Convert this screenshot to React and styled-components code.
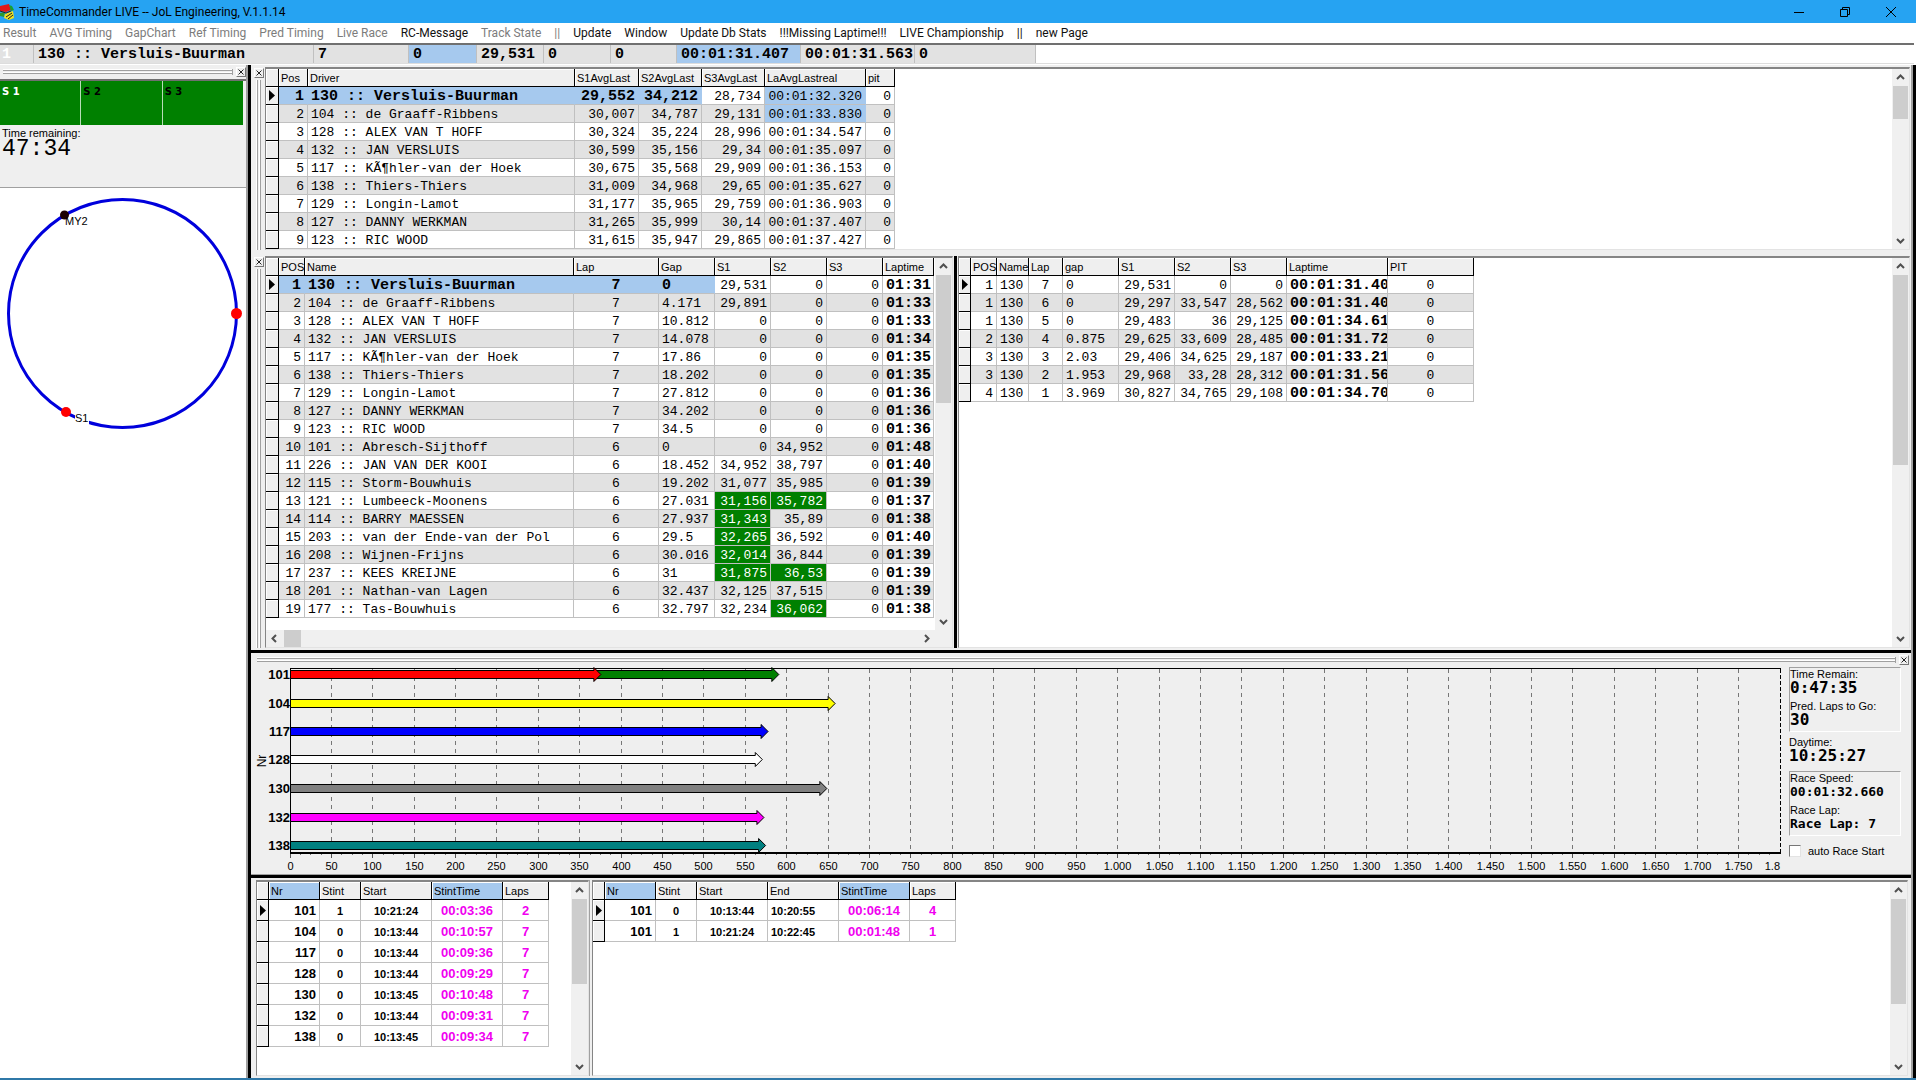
import React from "react";
import styled, { createGlobalStyle, css } from "styled-components";

const C = {
  face: "#efefef",
  stripe: "#e2e2e2",
  line: "#c0c0c0",
  shade: "#a0a0a0",
  dark: "#707070",
  sel: "#a6c9ee",
  green: "#008000",
  magenta: "#f000f0",
};

const SANS = '"Liberation Sans", Arial, sans-serif';
const MONO = '"Liberation Mono", "Courier New", monospace';
const UI = 'Roboto, "Segoe UI", sans-serif';

const GlobalStyle = createGlobalStyle`
  * { box-sizing: border-box; }
  body { margin: 0; background: #fff; color: #000; font: 11px ${SANS}; }
  button { margin: 0; padding: 0; border: 0; background: none; font: inherit; color: inherit; }
`;

/* ---------- window frame ---------- */

const Frame = styled.div`
  display: flex;
  flex-direction: column;
  min-height: 100vh;
  border-bottom: 2px solid #2f78a8;
`;

const TitleBar = styled.header`
  display: flex;
  align-items: center;
  height: 23px;
  background: #26a3f2;
  svg { display: block; }
`;

const Title = styled.h1`
  flex: 1;
  margin: 0;
  padding-left: 5px;
  font: 12px/22px ${UI};
`;

const WindowButton = styled.button`
  display: flex;
  align-items: center;
  justify-content: center;
  width: 46px;
  height: 21px;
  &:last-child { margin-right: 2px; }
`;

const MenuBar = styled.nav`
  display: flex;
  gap: 13px;
  height: 20px;
  padding-left: 3px;
  background: #fff;
`;

const MenuItem = styled.button`
  font: 12px/20px ${UI};
  white-space: nowrap;
  color: #111;
  &:disabled { color: #7c7c7c; }
`;

const Strip = styled.div`
  display: flex;
  height: 21px;
  margin: 0 2px 1px 0;
  border-top: 2px solid ${C.dark};
  border-bottom: 1px solid #ddd;
  background: #fff;
`;

const StripCell = styled.div`
  flex: none;
  width: ${(p) => p.$w}px;
  height: 18px;
  padding-left: ${(p) => p.$pad || 4}px;
  border-right: 1px solid ${C.line};
  background: ${(p) => (p.$sel ? C.sel : C.stripe)};
  color: ${(p) => (p.$faint ? "#fff" : "#000")};
  font: bold 15px/20px ${MONO};
  white-space: pre;
`;

const Workspace = styled.main`
  flex: 1;
  display: flex;
  align-items: stretch;
  border-right: 3px solid #000;
`;

/* ---------- docking chrome ---------- */

const Splitter = styled.div`
  flex: none;
  background: #000;
  ${(p) => (p.$v ? "width: 3px;" : "height: 3px;")}
`;

const CloseBox = styled.button`
  flex: none;
  display: flex;
  align-items: center;
  justify-content: center;
  width: 10px;
  height: 10px;
  background: ${C.face};
  border: 1px solid;
  border-color: #fff #777 #777 #fff;
`;

const Grip = styled.div`
  flex: 1;
  ${(p) =>
    p.$v
      ? css`
          width: 6px;
          background: linear-gradient(90deg, #fff 1px, ${C.shade} 1px 2px, ${C.face} 2px 3px, #fff 3px 4px, ${C.shade} 4px 5px, ${C.face} 5px);
        `
      : css`
          height: 6px;
          border-right: 1px solid ${C.shade};
          background: linear-gradient(#fff 1px, ${C.shade} 1px 2px, ${C.face} 2px 3px, #fff 3px 4px, ${C.shade} 4px 5px, ${C.face} 5px);
        `}
`;

const TopGripBar = styled.div`
  display: flex;
  align-items: center;
  gap: 3px;
  height: 14px;
  padding: 0 0 0 3px;
  background: ${C.face};
`;

const Gutter = styled.div`
  flex: none;
  display: flex;
  flex-direction: column;
  align-items: center;
  gap: 2px;
  width: 14px;
  padding: 1px 0 0 1px;
  background: ${C.face};
`;

const Sunken = styled.div`
  flex: ${(p) => (p.$w ? "none" : "1")};
  ${(p) => p.$w && `width: ${p.$w}px;`}
  min-width: 0;
  display: flex;
  flex-direction: column;
  background: #fff;
  border: 1px solid;
  border-width: 2px 1px 1px 1px;
  border-color: #858585 #e3e3e3 #e3e3e3 #858585;
`;

const SunkenBody = styled.div`
  flex: 1;
  display: flex;
  justify-content: space-between;
  min-width: 0;
`;

/* ---------- scroll bars ---------- */

const Bar = styled.div`
  flex: none;
  display: flex;
  flex-direction: ${(p) => (p.$h ? "row" : "column")};
  background: #f0f0f0;
  ${(p) => (p.$h ? "height: 17px; padding-right: 17px;" : "width: 17px;")}
`;

const BarButton = styled.button`
  flex: none;
  display: flex;
  align-items: center;
  justify-content: center;
  width: 17px;
  height: 17px;
  &:last-child { ${(p) => (p.$h ? "margin-left: auto;" : "margin-top: auto;")} }
`;

const Thumb = styled.div`
  margin: 0 1px;
  background: #cdcdcd;
  ${(p) => (p.$h ? `width: ${p.$size}px;` : `height: ${p.$size}px;`)}
`;

const chevrons = {
  up: "M1 6 L4.5 2.5 L8 6",
  down: "M1 3 L4.5 6.5 L8 3",
  left: "M6 1 L2.5 4.5 L6 8",
  right: "M3 1 L6.5 4.5 L3 8",
};

const Chevron = ({ dir }) => (
  <svg width="9" height="9" viewBox="0 0 9 9" aria-hidden="true">
    <path d={chevrons[dir]} fill="none" stroke="#505050" strokeWidth="2" />
  </svg>
);

const ScrollBar = ({ h, size }) => (
  <Bar $h={h}>
    <BarButton $h={h} aria-label={h ? "Scroll left" : "Scroll up"}>
      <Chevron dir={h ? "left" : "up"} />
    </BarButton>
    <Thumb $h={h} $size={size} />
    <BarButton $h={h} aria-label={h ? "Scroll right" : "Scroll down"}>
      <Chevron dir={h ? "right" : "down"} />
    </BarButton>
  </Bar>
);

const Close = () => (
  <CloseBox aria-label="Close panel">
    <svg width="6" height="6" viewBox="0 0 6 6" aria-hidden="true">
      <path d="M0.5 0.5 L5.5 5.5 M5.5 0.5 L0.5 5.5" stroke="#222" strokeWidth="1" />
    </svg>
  </CloseBox>
);

/* ---------- data grid ---------- */

const Table = styled.table`
  flex: none;
  align-self: flex-start;
  width: ${(p) => p.$w}px;
  table-layout: fixed;
  border-collapse: separate;
  border-spacing: 0;
`;

const Th = styled.th`
  height: 18px;
  padding: 2px 0 0 2px;
  overflow: hidden;
  background: ${(p) => (p.$sel ? C.sel : C.face)};
  border: solid #000;
  border-width: 0 1px 1px 0;
  box-shadow: inset 1px 1px 0 #fff;
  font: 11px/15px ${SANS};
  text-align: left;
  white-space: nowrap;
`;

const Marker = styled.th`
  padding: 0 0 0 3px;
  background: ${C.face};
  border: solid #000;
  border-width: 0 1px 1px 0;
  box-shadow: inset 1px 1px 0 #fff;
  svg { display: block; }
`;

const Td = styled.td`
  height: ${(p) => p.$rowH}px;
  padding: 2px ${(p) => (p.$align === "right" ? 3 : 0)}px 0 ${(p) => (p.$align === "center" ? 0 : 3)}px;
  overflow: hidden;
  border: solid ${C.line};
  border-width: 0 1px 1px 0;
  ${(p) => p.$tone === "sel" && `border-right-color: ${C.sel};`}
  background: ${(p) =>
    p.$tone === "sel" ? C.sel : p.$tone === "best" ? C.green : p.$stripe ? C.stripe : "#fff"};
  color: ${(p) => (p.$tone === "best" ? "#fff" : p.$pink ? C.magenta : "#000")};
  font-family: ${(p) => (p.$sans ? SANS : MONO)};
  font-size: ${(p) => p.$size}px;
  font-weight: ${(p) => (p.$bold ? "bold" : "normal")};
  line-height: ${(p) => p.$rowH - 3}px;
  text-align: ${(p) => p.$align};
  white-space: pre;
`;

/* A column is { t: title, w: width, a: alignment, bold, pink, size, sel }. */
function Grid({ label, marker, cols, rows, rowH = 18, sans, striped, tones = {} }) {
  const total = cols.reduce((s, c) => s + c.w, marker);
  return (
    <Table $w={total} aria-label={label}>
      <colgroup>
        <col style={{ width: marker }} />
        {cols.map((c) => (
          <col key={c.t} style={{ width: c.w }} />
        ))}
      </colgroup>
      <thead>
        <tr>
          <Th aria-label="Current row" />
          {cols.map((c) => (
            <Th key={c.t} scope="col" $sel={c.sel}>
              {c.t}
            </Th>
          ))}
        </tr>
      </thead>
      <tbody>
        {rows.map((r, i) => (
          <tr key={i}>
            <Marker aria-label={i === 0 ? "Selected" : "Row"}>
              {i === 0 && (
                <svg width="6" height="11" viewBox="0 0 6 11" aria-hidden="true">
                  <path d="M0 0 L6 5.5 L0 11 Z" />
                </svg>
              )}
            </Marker>
            {r.map((v, j) => {
              const tone = tones[`${i}:${j}`] || "";
              const c = cols[j];
              const bold = c.bold || tone === "sel bold";
              return (
                <Td
                  key={j}
                  $rowH={rowH}
                  $align={c.a}
                  $stripe={striped && i % 2 === 1}
                  $tone={tone.split(" ")[0]}
                  $bold={bold}
                  $pink={c.pink}
                  $sans={sans}
                  $size={c.size || (bold ? 15 : 13)}
                >
                  {v}
                </Td>
              );
            })}
          </tr>
        ))}
      </tbody>
    </Table>
  );
}

/* ---------- data ---------- */

const menu = [
  ["Result", 0], ["AVG Timing", 0], ["GapChart", 0], ["Ref Timing", 0], ["Pred Timing", 0],
  ["Live Race", 0], ["RC-Message", 1], ["Track State", 0], ["||", 0], ["Update", 1],
  ["Window", 1], ["Update Db Stats", 1], ["!!!Missing Laptime!!!", 1],
  ["LIVE Championship", 1], ["||", 1], ["new Page", 1],
];

const strip = [
  { v: "1", w: 34, faint: true, pad: 2 },
  { v: "130 :: Versluis-Buurman", w: 280 },
  { v: "7", w: 95 },
  { v: "0", w: 68, sel: true },
  { v: "29,531", w: 67 },
  { v: "0", w: 67 },
  { v: "0", w: 66 },
  { v: "00:01:31.407", w: 124, sel: true },
  { v: "00:01:31.563", w: 114 },
  { v: "0", w: 121 },
];

const avgCols = [
  { t: "Pos", w: 29, a: "right" },
  { t: "Driver", w: 267, a: "left" },
  { t: "S1AvgLast", w: 64, a: "right" },
  { t: "S2AvgLast", w: 63, a: "right" },
  { t: "S3AvgLast", w: 63, a: "right" },
  { t: "LaAvgLastreal", w: 101, a: "right" },
  { t: "pit", w: 29, a: "right" },
];

const avgRows = [
  ["1", "130 :: Versluis-Buurman", "29,552", "34,212", "28,734", "00:01:32.320", "0"],
  ["2", "104 :: de Graaff-Ribbens", "30,007", "34,787", "29,131", "00:01:33.830", "0"],
  ["3", "128 :: ALEX VAN T HOFF", "30,324", "35,224", "28,996", "00:01:34.547", "0"],
  ["4", "132 :: JAN VERSLUIS", "30,599", "35,156", "29,34", "00:01:35.097", "0"],
  ["5", "117 :: KÃ¶hler-van der Hoek", "30,675", "35,568", "29,909", "00:01:36.153", "0"],
  ["6", "138 :: Thiers-Thiers", "31,009", "34,968", "29,65", "00:01:35.627", "0"],
  ["7", "129 :: Longin-Lamot", "31,177", "35,965", "29,759", "00:01:36.903", "0"],
  ["8", "127 :: DANNY WERKMAN", "31,265", "35,999", "30,14", "00:01:37.407", "0"],
  ["9", "123 :: RIC WOOD", "31,615", "35,947", "29,865", "00:01:37.427", "0"],
];

const avgTones = {
  "0:0": "sel bold", "0:1": "sel bold", "0:2": "sel bold", "0:3": "sel bold",
  "0:5": "sel", "1:5": "sel",
};

const raceCols = [
  { t: "POS", w: 26, a: "right" },
  { t: "Name", w: 269, a: "left" },
  { t: "Lap", w: 85, a: "center" },
  { t: "Gap", w: 56, a: "left" },
  { t: "S1", w: 56, a: "right" },
  { t: "S2", w: 56, a: "right" },
  { t: "S3", w: 56, a: "right" },
  { t: "Laptime", w: 51, a: "left", bold: true },
];

const raceRows = [
  ["1", "130 :: Versluis-Buurman", "7", "0", "29,531", "0", "0", "01:31"],
  ["2", "104 :: de Graaff-Ribbens", "7", "4.171", "29,891", "0", "0", "01:33"],
  ["3", "128 :: ALEX VAN T HOFF", "7", "10.812", "0", "0", "0", "01:33"],
  ["4", "132 :: JAN VERSLUIS", "7", "14.078", "0", "0", "0", "01:34"],
  ["5", "117 :: KÃ¶hler-van der Hoek", "7", "17.86", "0", "0", "0", "01:35"],
  ["6", "138 :: Thiers-Thiers", "7", "18.202", "0", "0", "0", "01:35"],
  ["7", "129 :: Longin-Lamot", "7", "27.812", "0", "0", "0", "01:36"],
  ["8", "127 :: DANNY WERKMAN", "7", "34.202", "0", "0", "0", "01:36"],
  ["9", "123 :: RIC WOOD", "7", "34.5", "0", "0", "0", "01:36"],
  ["10", "101 :: Abresch-Sijthoff", "6", "0", "0", "34,952", "0", "01:48"],
  ["11", "226 :: JAN VAN DER KOOI", "6", "18.452", "34,952", "38,797", "0", "01:40"],
  ["12", "115 :: Storm-Bouwhuis", "6", "19.202", "31,077", "35,985", "0", "01:39"],
  ["13", "121 :: Lumbeeck-Moonens", "6", "27.031", "31,156", "35,782", "0", "01:37"],
  ["14", "114 :: BARRY MAESSEN", "6", "27.937", "31,343", "35,89", "0", "01:38"],
  ["15", "203 :: van der Ende-van der Pol", "6", "29.5", "32,265", "36,592", "0", "01:40"],
  ["16", "208 :: Wijnen-Frijns", "6", "30.016", "32,014", "36,844", "0", "01:39"],
  ["17", "237 :: KEES KREIJNE", "6", "31", "31,875", "36,53", "0", "01:39"],
  ["18", "201 :: Nathan-van Lagen", "6", "32.437", "32,125", "37,515", "0", "01:39"],
  ["19", "177 :: Tas-Bouwhuis", "6", "32.797", "32,234", "36,062", "0", "01:38"],
];

const raceTones = {
  "0:0": "sel bold", "0:1": "sel bold", "0:2": "sel bold", "0:3": "sel bold",
  "12:4": "best", "12:5": "best", "13:4": "best", "14:4": "best", "15:4": "best",
  "16:4": "best", "16:5": "best", "18:5": "best",
};

const lapCols = [
  { t: "POS", w: 26, a: "right" },
  { t: "Name", w: 32, a: "left" },
  { t: "Lap", w: 34, a: "center" },
  { t: "gap", w: 56, a: "left" },
  { t: "S1", w: 56, a: "right" },
  { t: "S2", w: 56, a: "right" },
  { t: "S3", w: 56, a: "right" },
  { t: "Laptime", w: 101, a: "left", bold: true },
  { t: "PIT", w: 86, a: "center" },
];

const lapRows = [
  ["1", "130", "7", "0", "29,531", "0", "0", "00:01:31.40", "0"],
  ["1", "130", "6", "0", "29,297", "33,547", "28,562", "00:01:31.40", "0"],
  ["1", "130", "5", "0", "29,483", "36", "29,125", "00:01:34.61", "0"],
  ["2", "130", "4", "0.875", "29,625", "33,609", "28,485", "00:01:31.72", "0"],
  ["3", "130", "3", "2.03", "29,406", "34,625", "29,187", "00:01:33.21", "0"],
  ["3", "130", "2", "1.953", "29,968", "33,28", "28,312", "00:01:31.56", "0"],
  ["4", "130", "1", "3.969", "30,827", "34,765", "29,108", "00:01:34.70", "0"],
];

const stintCols = [
  { t: "Nr", w: 51, a: "right", bold: true, size: 13, sel: true },
  { t: "Stint", w: 41, a: "center", bold: true, size: 11 },
  { t: "Start", w: 71, a: "center", bold: true, size: 11 },
  { t: "StintTime", w: 71, a: "center", bold: true, size: 13, pink: true, sel: true },
  { t: "Laps", w: 46, a: "center", bold: true, size: 13, pink: true },
];

const stintRows = [
  ["101", "1", "10:21:24", "00:03:36", "2"],
  ["104", "0", "10:13:44", "00:10:57", "7"],
  ["117", "0", "10:13:44", "00:09:36", "7"],
  ["128", "0", "10:13:44", "00:09:29", "7"],
  ["130", "0", "10:13:45", "00:10:48", "7"],
  ["132", "0", "10:13:44", "00:09:31", "7"],
  ["138", "0", "10:13:45", "00:09:34", "7"],
];

const historyCols = [
  ...stintCols.slice(0, 3),
  { t: "End", w: 71, a: "left", bold: true, size: 11 },
  ...stintCols.slice(3),
];

const historyRows = [
  ["101", "0", "10:13:44", "10:20:55", "00:06:14", "4"],
  ["101", "1", "10:21:24", "10:22:45", "00:01:48", "1"],
];

/* ---------- left dock ---------- */

const LeftDock = styled.aside`
  flex: none;
  width: 248px;
  border-right: 2px solid ${C.shade};
  background: #fff;
`;

const Status = styled.section`
  height: 109px;
  padding-right: 3px;
  border-top: 2px solid ${C.dark};
  border-bottom: 1px solid ${C.shade};
  background: ${C.face};
`;

const Sectors = styled.div`
  display: grid;
  grid-template-columns: repeat(3, 1fr);
  gap: 1px;
  background: #b8dcb8;
`;

const Sector = styled.div`
  height: 44px;
  padding: 5px 2px;
  background: ${C.green};
  color: ${(p) => (p.$on ? "#fff" : "#000")};
  font: bold 10px/12px "DejaVu Sans", sans-serif;
`;

const SmallLabel = styled.div`
  font: 11px/12px ${SANS};
  white-space: nowrap;
`;

const Clock = styled.div`
  font: 23px/20px ${MONO};
`;

const StatusText = styled.div`
  padding: 2px;
`;

const TrackBox = styled.div`
  padding-top: 10px;
  svg { display: block; }
  text { font: 11px ${SANS}; }
`;

const TrackMap = () => (
  <TrackBox>
    <svg width="245" height="234" viewBox="0 198 245 234" role="img" aria-label="Track map">
      <circle cx="122.5" cy="313.5" r="114" fill="none" stroke="#0000dc" strokeWidth="3" />
      <circle cx="64.5" cy="215" r="4.5" fill="#1c0000" />
      <circle cx="236.5" cy="313.5" r="5.5" fill="#f00" />
      <rect x="75" y="411" width="14" height="13" fill="#fff" />
      <circle cx="66" cy="412" r="5" fill="#f00" />
      <text x="65" y="225">MY2</text>
      <text x="75" y="422">S1</text>
    </svg>
  </TrackBox>
);

/* ---------- chart ---------- */

const bars = [
  { nr: "101", y: 675, parts: [{ v: 590, c: "#008000" }, { v: 375, c: "#ff0000" }] },
  { nr: "104", y: 704, parts: [{ v: 658, c: "#ffff00" }] },
  { nr: "117", y: 732, parts: [{ v: 577, c: "#0000ff" }] },
  { nr: "128", y: 760, parts: [{ v: 570, c: "#ffffff" }] },
  { nr: "130", y: 789, parts: [{ v: 648, c: "#808080" }] },
  { nr: "132", y: 818, parts: [{ v: 572, c: "#ff00ff" }] },
  { nr: "138", y: 846, parts: [{ v: 574, c: "#008080" }] },
];

const X0 = 36.5;
const UNIT = 0.8277;
const TOP = 668;

const arrow = (v, y) => {
  const tip = X0 + v * UNIT;
  const neck = tip - 7;
  return `M${X0} ${y - 4} H${neck} V${y - 7} L${tip} ${y} L${neck} ${y + 7} V${y + 4} H${X0} Z`;
};

const thousands = (n) => (n >= 1000 ? `${Math.floor(n / 1000)}.${String(n % 1000).padStart(3, "0")}` : `${n}`);

const ChartBox = styled.div`
  flex: 1;
  min-width: 0;
  svg { display: block; width: 100%; height: auto; }
  .tick { font: 11px ${SANS}; text-anchor: middle; }
  .last { font: 11px ${SANS}; text-anchor: end; }
  .nr { font: bold 13px ${SANS}; text-anchor: end; }
  .axis { font: 12px ${SANS}; text-anchor: middle; }
`;

function StintChart() {
  const ticks = Array.from({ length: 36 }, (_, i) => i * 50);
  const minor = Array.from({ length: 144 }, (_, i) => i).filter((i) => i % 4);
  return (
    <ChartBox>
      <svg viewBox="0 0 1527 207" role="img" aria-label="Stint time per car">
        <path d="M36 1.5 H1527" stroke="#000" strokeWidth="1" />
        {ticks.map((t) => {
          const x = Math.round(X0 + t * UNIT) - 0.5;
          return (
            <g key={t}>
              <path d={`M${x} 2 V185`} stroke="#777" strokeDasharray="4 4" />
              <path d={`M${x} 186 V191`} stroke="#555" />
              <text className="tick" x={x} y="203">{thousands(t)}</text>
            </g>
          );
        })}
        <path d="M1526.5 2 V185" stroke="#000" strokeDasharray="4 2" />
        <text className="last" x="1526" y="203">1.8</text>
        {minor.map((i) => (
          <path key={i} d={`M${Math.round(X0 + i * 12.5 * UNIT) - 0.5} 186 V188`} stroke="#777" />
        ))}
        <path d="M36.5 1 V186" stroke="#000" />
        {bars.map((b) => (
          <g key={b.nr} transform={`translate(0 ${-TOP})`}>
            {b.parts.map((p) => (
              <path key={p.c} d={arrow(p.v, b.y + 0.5)} fill={p.c} stroke="#000" strokeWidth="1" />
            ))}
            <text className="nr" x="36" y={b.y + 5}>{b.nr}</text>
          </g>
        ))}
        <path d="M36 186 H1527" stroke="#000" strokeWidth="2" />
        <text className="axis" transform="translate(12 94) rotate(-90)">Nr</text>
      </svg>
    </ChartBox>
  );
}

const ChartPanel = styled.section`
  background: ${C.face};
  border-bottom: 1px solid ${C.shade};
  padding: 0 2px 0 3px;
`;

const ChartRow = styled.div`
  display: flex;
`;

const Side = styled.div`
  flex: none;
  width: 128px;
  padding: 0 8px;
`;

const Well = styled.div`
  display: flex;
  flex-direction: column;
  gap: 4px;
  ${(p) =>
    p.$plain
      ? css`
          height: 39px;
          padding-top: 4px;
        `
      : css`
          height: 65px;
          border: 1px solid;
          border-color: ${C.shade} #fff #fff ${C.shade};
        `}
`;

const Reading = styled.div`
  font: bold ${(p) => p.$size}px/16px "DejaVu Sans Mono", monospace;
  white-space: nowrap;
`;

const Check = styled.label`
  display: flex;
  align-items: center;
  gap: 7px;
  padding-top: 8px;
  font: 11px/14px ${SANS};
  white-space: nowrap;
  input {
    appearance: none;
    width: 12px;
    height: 12px;
    margin: 0;
    background: #fff;
    border: 1px solid;
    border-color: #777 #e3e3e3 #e3e3e3 #777;
  }
`;

const Field = ({ label, size, children }) => (
  <div>
    <SmallLabel>{label}</SmallLabel>
    <Reading $size={size}>{children}</Reading>
  </div>
);

/* ---------- right side ---------- */

const Main = styled.div`
  flex: 1;
  min-width: 0;
  display: flex;
  flex-direction: column;
  background: ${C.face};
  border-right: 2px solid ${C.shade};
`;

const PanelRow = styled.section`
  display: flex;
  ${(p) => p.$grow && "flex: 1;"}
  padding: ${(p) => p.$p || "0"};
`;

const Tail = styled.div`
  height: 12px;
`;

const MidSplit = styled(Splitter)`
  margin: 0 1px;
`;

const Divider = styled.div`
  flex: none;
  width: 3px;
  border-left: 1px solid ${C.shade};
`;

function AppIcon() {
  return (
    <svg width="14" height="20" viewBox="0 0 14 20" aria-hidden="true">
      <path d="M0 4 L9 2 L11 8 L6 10 L0 9 Z" fill="#e01818" />
      <path d="M9 3 L12 4 L14 8 L11 9 Z" fill="#18a030" />
      <path d="M0 11 L5 10 L4 15 L0 14 Z" fill="#2a9a30" />
      <path d="M5 12 L13 9 L14 16 L9 18 L4 16 Z" fill="#f0e020" />
      <path d="M0 9 L6 11 L11 9 M6 15 L12 11 M8 17 L13 13" fill="none" stroke="#222" strokeWidth="1" />
    </svg>
  );
}

export default function App() {
  return (
    <Frame>
      <GlobalStyle />
      <TitleBar>
        <AppIcon />
        <Title>TimeCommander LIVE -- JoL Engineering, V.1.1.14</Title>
        <WindowButton aria-label="Minimize">
          <svg width="10" height="10" viewBox="0 0 10 10"><path d="M0 5.5 H10" stroke="#000" /></svg>
        </WindowButton>
        <WindowButton aria-label="Restore">
          <svg width="10" height="10" viewBox="0 0 10 10">
            <path d="M0.5 2.5 H7.5 V9.5 H0.5 Z M2.5 2.5 V0.5 H9.5 V7.5 H7.5" fill="none" stroke="#000" />
          </svg>
        </WindowButton>
        <WindowButton aria-label="Close">
          <svg width="10" height="10" viewBox="0 0 10 10"><path d="M0 0 L10 10 M10 0 L0 10" stroke="#000" /></svg>
        </WindowButton>
      </TitleBar>
      <MenuBar>
        {menu.map(([t, on], i) => (
          <MenuItem key={i} disabled={!on}>{t}</MenuItem>
        ))}
      </MenuBar>
      <Strip>
        {strip.map((c, i) => (
          <StripCell key={i} $w={c.w} $sel={c.sel} $faint={c.faint} $pad={c.pad}>{c.v}</StripCell>
        ))}
      </Strip>

      <Workspace>
        <LeftDock>
          <TopGripBar>
            <Grip />
            <Close />
          </TopGripBar>
          <Status>
            <Sectors>
              <Sector $on>S 1</Sector>
              <Sector>S 2</Sector>
              <Sector>S 3</Sector>
            </Sectors>
            <StatusText>
              <SmallLabel>Time remaining:</SmallLabel>
              <Clock>47:34</Clock>
            </StatusText>
          </Status>
          <TrackMap />
        </LeftDock>
        <Splitter $v />

        <Main>
          <PanelRow $p="2px 1px 6px 0">
            <Gutter>
              <Close />
              <Grip $v />
            </Gutter>
            <Sunken>
              <SunkenBody>
                <Grid label="Average sector times" marker={13} cols={avgCols} rows={avgRows} striped tones={avgTones} />
                <ScrollBar size={33} />
              </SunkenBody>
            </Sunken>
          </PanelRow>

          <PanelRow $p="0 1px 2px 0">
            <Gutter>
              <Close />
              <Grip $v />
            </Gutter>
            <Sunken $w={688}>
              <SunkenBody>
                <div>
                  <Grid label="Race standing" marker={13} cols={raceCols} rows={raceRows} striped tones={raceTones} />
                  <Tail />
                </div>
                <ScrollBar size={128} />
              </SunkenBody>
              <ScrollBar h size={17} />
            </Sunken>
            <MidSplit $v />
            <Sunken>
              <SunkenBody>
                <Grid label="Laps of the selected car" marker={12} cols={lapCols} rows={lapRows} striped />
                <ScrollBar size={190} />
              </SunkenBody>
            </Sunken>
          </PanelRow>
          <Splitter />

          <ChartPanel>
            <TopGripBar>
              <Grip />
              <Close />
            </TopGripBar>
            <ChartRow>
              <StintChart />
              <Side>
                <Well>
                  <Field label="Time Remain:" size={16}>0:47:35</Field>
                  <Field label="Pred. Laps to Go:" size={16}>30</Field>
                </Well>
                <Well $plain>
                  <Field label="Daytime:" size={16}>10:25:27</Field>
                </Well>
                <Well>
                  <Field label="Race Speed:" size={13}>00:01:32.660</Field>
                  <Field label="Race Lap:" size={13}>Race Lap: 7</Field>
                </Well>
                <Check>
                  <input type="checkbox" />
                  auto Race Start
                </Check>
              </Side>
            </ChartRow>
          </ChartPanel>
          <Splitter />

          <PanelRow $grow $p="2px 3px 2px 5px">
            <Sunken $w={333}>
              <SunkenBody>
                <Grid label="Current stints" marker={12} cols={stintCols} rows={stintRows} rowH={21} sans />
                <ScrollBar size={85} />
              </SunkenBody>
            </Sunken>
            <Divider />
            <Sunken>
              <SunkenBody>
                <Grid label="Stint history" marker={12} cols={historyCols} rows={historyRows} rowH={21} sans />
                <ScrollBar size={105} />
              </SunkenBody>
            </Sunken>
          </PanelRow>
        </Main>
      </Workspace>
    </Frame>
  );
}
